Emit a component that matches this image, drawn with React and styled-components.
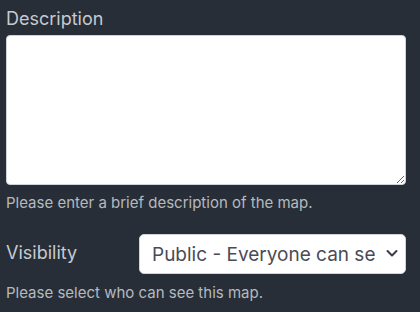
import React from 'react';
import styled, {createGlobalStyle} from 'styled-components';

const GlobalStyle = createGlobalStyle`
    html, body {
        margin: 0;
        padding: 0;
        background: #282e38;
    }
    body {
        font-family: Inter, "Liberation Sans", Arial, sans-serif;
    }
`

const Form = styled.form`
    width: 400px;
    padding: 7px 0 0 6px;
`

const Group = styled.div`
    margin-bottom: ${props => props.gap || 0}px;
`

const Label = styled.label`
    display: block;
    color: #c6cacf;
    font-size: 18px;
    line-height: 24px;
    margin-bottom: 4px;
`

const TextArea = styled.textarea`
    display: block;
    box-sizing: border-box;
    width: 400px;
    height: 150px;
    margin: 0;
    border: 1px solid #ced4da;
    border-radius: 4px;
    background: #ffffff;
    font-family: inherit;
    font-size: 16px;
    resize: vertical;
`

const Help = styled.small`
    display: block;
    color: #b5babf;
    font-size: 15px;
    line-height: 18px;
    margin-top: ${props => props.top || 8}px;
`

const Row = styled.div`
    display: grid;
    grid-template-columns: 133px 267px;
    align-items: center;
`

const InlineLabel = styled(Label)`
    margin: 0;
    padding-bottom: 3px;
`

const SelectWrap = styled.div`
    position: relative;
    height: 40px;
`

const Select = styled.select`
    appearance: none;
    box-sizing: border-box;
    width: 267px;
    height: 40px;
    margin: 0;
    padding: 0 30px 0 12px;
    border: 1px solid #ced4da;
    border-radius: 5px;
    background: #ffffff;
    color: #4a4b55;
    font-family: inherit;
    font-size: 19px;
`

const Chevron = styled.svg`
    position: absolute;
    right: 8px;
    top: 15px;
    width: 12px;
    height: 9px;
    pointer-events: none;
`

const App = () => {
    return(
        <>
            <GlobalStyle/>
            <Form>
                <Group gap={22}>
                    <Label htmlFor="description">Description</Label>
                    <TextArea id="description"/>
                    <Help top={9}>Please enter a brief description of the map.</Help>
                </Group>
                <Group>
                    <Row>
                        <InlineLabel htmlFor="visibility">Visibility</InlineLabel>
                        <SelectWrap>
                            <Select id="visibility" defaultValue="public">
                                <option value="public">Public - Everyone can see this map</option>
                                <option value="private">Private - Only you can see this map</option>
                            </Select>
                            <Chevron viewBox="0 0 12 9">
                                <path d="M1.5 2 L6 6.5 L10.5 2" fill="none" stroke="#3a3b45" strokeWidth="2" strokeLinecap="round" strokeLinejoin="round"/>
                            </Chevron>
                        </SelectWrap>
                    </Row>
                    <Help top={10}>Please select who can see this map.</Help>
                </Group>
            </Form>
        </>
    )
}

export default App
